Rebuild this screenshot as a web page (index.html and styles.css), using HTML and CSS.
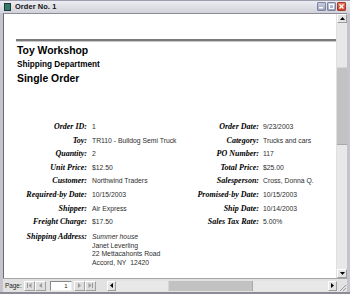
FILE: index.html
```html
<!DOCTYPE html>
<html lang="en">
<head>
    <meta charset="UTF-8">
    <title>Order No. 1</title>
    <link rel="stylesheet" href="styles.css">
</head>
<body>
<div class="window">
    <div class="titlebar">
        <span class="app-icon"></span>
        <span class="title">Order No. 1</span>
        <div class="caption-buttons">
            <span class="cap-btn"><svg width="7" height="7" viewBox="0 0 7 7"><rect x="1" y="4" width="4" height="1.5" fill="#fff"/></svg></span>
            <span class="cap-btn"><svg width="7" height="7" viewBox="0 0 7 7"><rect x="1.5" y="1.5" width="4" height="4" fill="none" stroke="#fff" stroke-width="1"/></svg></span>
            <span class="cap-btn close"><svg width="7" height="7" viewBox="0 0 7 7"><path d="M1.5 1.5 L5.5 5.5 M5.5 1.5 L1.5 5.5" stroke="#fff" stroke-width="1.4"/></svg></span>
        </div>
    </div>

    <div class="client">
        <div class="report">
            <div class="rule"></div>
            <h1>Toy Workshop</h1>
            <h2>Shipping Department</h2>
            <h1 class="doc-title">Single Order</h1>

            <div class="fields">
                <span class="lbl">Order ID:</span><span class="val">1</span>
                <span class="lbl">Order Date:</span><span class="val right">9/23/2003</span>

                <span class="lbl">Toy:</span><span class="val">TR110 - Bulldog Semi Truck</span>
                <span class="lbl">Category:</span><span class="val right">Trucks and cars</span>

                <span class="lbl">Quantity:</span><span class="val">2</span>
                <span class="lbl">PO Number:</span><span class="val right">117</span>

                <span class="lbl">Unit Price:</span><span class="val">$12.50</span>
                <span class="lbl">Total Price:</span><span class="val right">$25.00</span>

                <span class="lbl">Customer:</span><span class="val">Northwind Traders</span>
                <span class="lbl">Salesperson:</span><span class="val right">Cross, Donna Q.</span>

                <span class="lbl">Required-by Date:</span><span class="val">10/15/2003</span>
                <span class="lbl">Promised-by Date:</span><span class="val right">10/15/2003</span>

                <span class="lbl">Shipper:</span><span class="val">Air Express</span>
                <span class="lbl">Ship Date:</span><span class="val right">10/14/2003</span>

                <span class="lbl">Freight Charge:</span><span class="val">$17.50</span>
                <span class="lbl">Sales Tax Rate:</span><span class="val right">5.00%</span>
            </div>

            <div class="address">
                <span class="lbl">Shipping Address:</span>
                <div class="addr-lines">
                    <em>Summer house</em>
                    <span>Janet Leverling</span>
                    <span>22 Mettacahonts Road</span>
                    <span>Accord, NY&nbsp;&nbsp;12420</span>
                </div>
            </div>
        </div>

        <div class="vscroll">
            <span class="sb-btn"><svg width="5" height="3" viewBox="0 0 5 3"><path d="M0 3 L2.5 0 L5 3 Z" fill="#000"/></svg></span>
            <span class="track-top"></span>
            <span class="thumb"></span>
            <span class="track-fill"></span>
            <span class="sb-btn"><svg width="5" height="3" viewBox="0 0 5 3"><path d="M0 0 L2.5 3 L5 0 Z" fill="#000"/></svg></span>
        </div>
    </div>

    <div class="navbar">
        <span class="page-lbl">Page:</span>
        <span class="nav-btn"><svg width="5" height="5" viewBox="0 0 5 5"><path d="M0.5 0 V5" stroke="#9a9a9a"/><path d="M4.5 0 L1.5 2.5 L4.5 5 Z" fill="#9a9a9a"/></svg></span>
        <span class="nav-btn"><svg width="5" height="5" viewBox="0 0 5 5"><path d="M4 0 L1 2.5 L4 5 Z" fill="#9a9a9a"/></svg></span>
        <span class="page-box">1</span>
        <span class="nav-btn"><svg width="5" height="5" viewBox="0 0 5 5"><path d="M1 0 L4 2.5 L1 5 Z" fill="#9a9a9a"/></svg></span>
        <span class="nav-btn"><svg width="5" height="5" viewBox="0 0 5 5"><path d="M0.5 0 L3.5 2.5 L0.5 5 Z" fill="#9a9a9a"/><path d="M4.5 0 V5" stroke="#9a9a9a"/></svg></span>

        <div class="hscroll">
            <span class="sb-btn"><svg width="3" height="5" viewBox="0 0 3 5"><path d="M3 0 L0 2.5 L3 5 Z" fill="#000"/></svg></span>
            <span class="htrack-left"></span>
            <span class="hthumb"></span>
            <span class="htrack-fill"></span>
            <span class="sb-btn"><svg width="3" height="5" viewBox="0 0 3 5"><path d="M0 0 L3 2.5 L0 5 Z" fill="#000"/></svg></span>
        </div>
        <span class="grip"><svg width="9" height="9" viewBox="0 0 9 9"><path d="M8 2 L2 8 M8 5 L5 8" stroke="#9a9a9a" stroke-width="1"/></svg></span>
    </div>
</div>
</body>
</html>
```

FILE: styles.css
```css
body {
  margin: 0;
  font-family: "Liberation Sans", Arial, sans-serif;
  background-color: #fff;
}

.window {
  width: 350px;
  height: 294px;
  display: flex;
  flex-direction: column;
  background-color: #c4c4cc;
  box-sizing: border-box;
  border-bottom: 2px solid #8c8c96;
}

/* title bar */
.titlebar {
  height: 13px;
  display: flex;
  align-items: center;
  padding-left: 4px;
  background: linear-gradient(#ecedf2, #d2d3da);
  border-top: 1px solid #9c9cac;
  box-sizing: border-box;
}

.app-icon {
  width: 5px;
  height: 6px;
  background-color: #2f7d68;
  border: 1px solid #25343a;
}

.title {
  margin-left: 4px;
  font-size: 7.4px;
  font-weight: bold;
  color: #111;
  letter-spacing: 0.1px;
}

.caption-buttons {
  margin-left: auto;
  margin-right: 4px;
  display: flex;
  gap: 1px;
}

.cap-btn {
  width: 7px;
  height: 7px;
  display: flex;
  background: linear-gradient(#c8cde0, #9aa2bd);
  border: 1px solid #7c84a0;
  border-radius: 1px;
}

.cap-btn.close {
  background: linear-gradient(#e87a62, #c8402a);
  border-color: #a33a28;
}

/* client area */
.client {
  height: 265px;
  display: flex;
  margin-left: 3px;
  margin-right: 3px;
  border-top: 1px solid #8c8c96;
  border-left: 1px solid #6c6c74;
}

.report {
  flex: 1;
  background-color: #fff;
  overflow: hidden;
}

.rule {
  margin-top: 25px;
  margin-left: 12px;
  border-top: 2px solid #7a7a7a;
  border-bottom: 1px solid #c6c6c6;
}

h1 {
  margin: 3px 0 0 13px;
  font-size: 10.4px;
  line-height: 12px;
  font-weight: bold;
  color: #000;
}

h2 {
  margin: 3px 0 0 13px;
  font-size: 8.2px;
  line-height: 10px;
  font-weight: bold;
  color: #000;
}

.doc-title {
  margin-top: 3px;
}

.fields {
  margin-top: 35px;
  display: grid;
  grid-template-columns: 83px 107px 65px 1fr;
  grid-auto-rows: 13.6px;
  line-height: 13.6px;
}

.lbl {
  font-family: "Liberation Serif", "Times New Roman", serif;
  font-weight: bold;
  font-style: italic;
  font-size: 8px;
  color: #000;
  text-align: right;
  white-space: nowrap;
}

.val {
  padding-left: 5px;
  font-size: 6.8px;
  color: #2e2e2e;
  white-space: nowrap;
}

.val.right {
  padding-left: 4px;
}

.address {
  margin-top: 4px;
  display: grid;
  grid-template-columns: 83px 1fr;
  line-height: 8.8px;
}

.addr-lines {
  display: flex;
  flex-direction: column;
  padding-left: 5px;
  font-size: 6.8px;
  color: #2e2e2e;
}

/* scroll bars */
.vscroll {
  width: 10px;
  display: flex;
  flex-direction: column;
  background-color: #e8e8e8;
  border-left: 1px solid #e0e0e0;
}

.sb-btn {
  width: 10px;
  height: 9px;
  display: flex;
  align-items: center;
  justify-content: center;
  background-color: #e4e4e4;
  border: 1px solid;
  border-color: #fff #9c9c9c #9c9c9c #fff;
  box-sizing: border-box;
}

.track-top {
  height: 44px;
}

.thumb {
  height: 78px;
  background-color: #c2c2c2;
  border-top: 1px solid #d6d6d6;
  border-bottom: 1px solid #a8a8a8;
  box-sizing: border-box;
}

.track-fill {
  flex: 1;
}

/* bottom navigation */
.navbar {
  height: 14px;
  display: flex;
  align-items: center;
  margin-left: 3px;
  margin-right: 3px;
  background-color: #e2e2e2;
  border-top: 1px solid #a4a4a4;
  box-sizing: border-box;
}

.page-lbl {
  margin-left: 2px;
  margin-right: 2px;
  font-size: 6.4px;
  color: #222;
}

.nav-btn {
  width: 11px;
  height: 10px;
  display: flex;
  align-items: center;
  justify-content: center;
  background-color: #dedede;
  border: 1px solid;
  border-color: #fff #a0a0a0 #a0a0a0 #fff;
  box-sizing: border-box;
}

.page-box {
  width: 22px;
  height: 10px;
  margin: 0 2px 0 4px;
  padding-right: 3px;
  background-color: #fff;
  border: 1px solid;
  border-color: #8a8a8a #eee #eee #8a8a8a;
  box-sizing: border-box;
  font-size: 6px;
  line-height: 8px;
  text-align: right;
  color: #222;
}

.hscroll {
  margin-left: 11px;
  flex: 1;
  height: 10px;
  display: flex;
  background-color: #e8e8e8;
}

.hscroll .sb-btn {
  width: 9px;
  height: 10px;
}

.htrack-left {
  width: 52px;
}

.hthumb {
  width: 85px;
  background-color: #c2c2c2;
  border-left: 1px solid #d6d6d6;
  border-right: 1px solid #a8a8a8;
  box-sizing: border-box;
}

.htrack-fill {
  flex: 1;
}

.grip {
  width: 10px;
  height: 12px;
  display: flex;
  align-items: flex-end;
  justify-content: flex-end;
}
```
